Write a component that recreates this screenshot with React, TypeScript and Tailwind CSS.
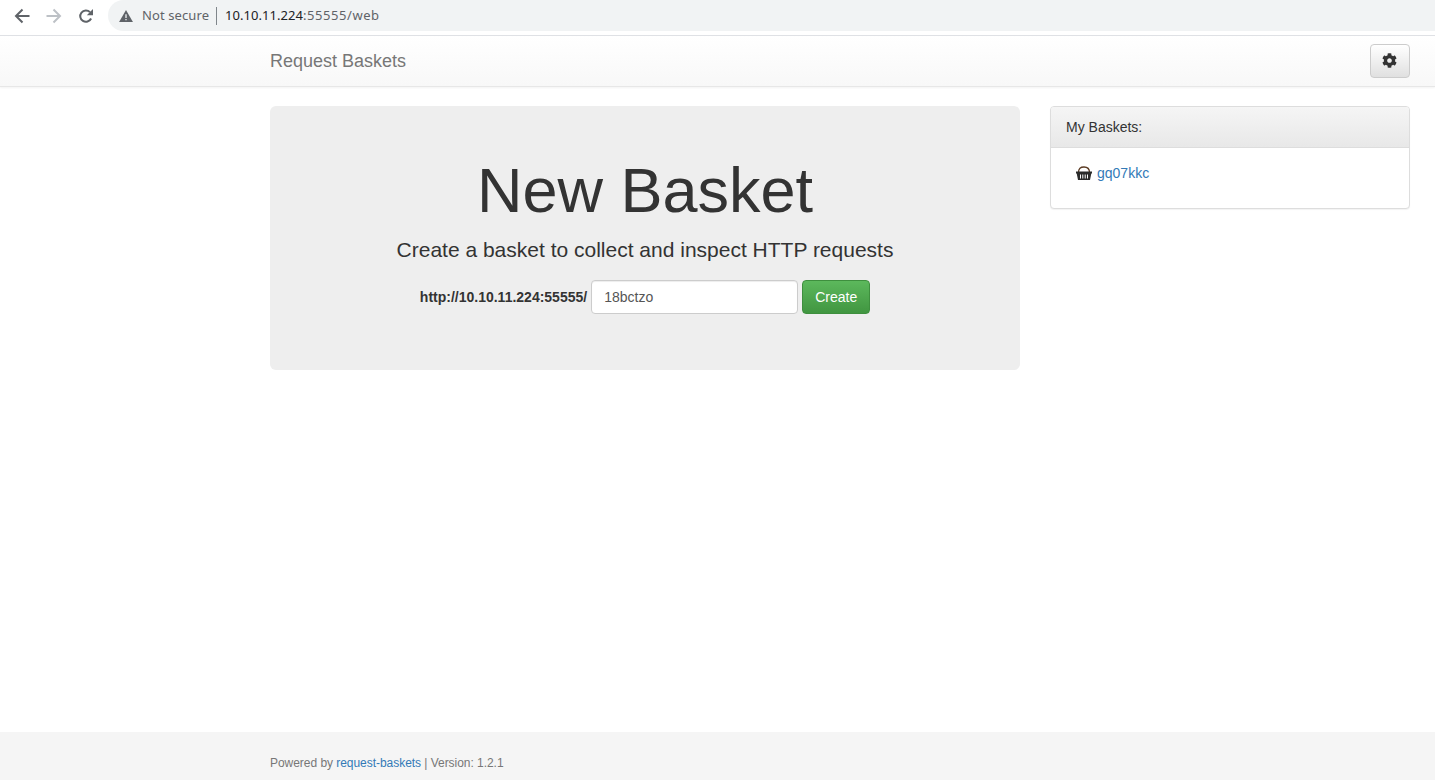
import React from "react";
import { FaCog } from "react-icons/fa";

function BackIcon({ color }: { color: string }) {
  return (
    <svg width="16" height="16" viewBox="0 0 16 16" fill="none" stroke={color} strokeWidth="2">
      <path d="M15.500 8H2M8.500 1.500L2 8l6.500 6.500" />
    </svg>
  );
}

function ForwardIcon({ color }: { color: string }) {
  return (
    <svg width="16" height="16" viewBox="0 0 16 16" fill="none" stroke={color} strokeWidth="2">
      <path d="M.5 8H14M7.500 1.500L14 8l-6.500 6.500" />
    </svg>
  );
}

function ReloadIcon() {
  return (
    <svg width="16" height="16" viewBox="0 0 16 16" fill="none">
      <path d="M13.100 10.500A5.700 5.700 0 1 1 12 4.100" stroke="#5f6368" strokeWidth="2" />
      <path d="M15 1v6.200H8.800z" fill="#5f6368" />
    </svg>
  );
}

function WarningIcon() {
  return (
    <svg width="14" height="12" viewBox="0 0 15 13">
      <path d="M7.500 0L15 13H0z" fill="#5f6368" />
      <path d="M6.800 4.500h1.400v4.200H6.800zM6.800 9.700h1.400v1.400H6.800z" fill="#f1f3f4" />
    </svg>
  );
}

function BasketIcon() {
  return (
    <svg width="16" height="14" viewBox="0 0 16 14">
      <path d="M2.500 6.500C2.500 2.500 4.500 1 8 1s5.500 1.500 5.500 5.500" fill="none" stroke="#5a3a22" strokeWidth="1.300" />
      <path d="M0 5.500h16v2h-.7L14 14H2L.7 7.500H0z" fill="#2b2b2b" />
      <path d="M4 8.500h1v4H4zM6.300 8.500h1v4h-1zM8.700 8.500h1v4h-1zM11 8.500h1v4h-1z" fill="#ffffff" />
    </svg>
  );
}

function BrowserBar() {
  return (
    <div className="flex h-[36px] items-start border-b border-[#dfe1e5] bg-white font-['Noto_Sans',sans-serif]">
      <div className="flex h-[31px] w-[108px] items-center gap-[16px] pl-[14px]">
        <BackIcon color="#5f6368" />
        <ForwardIcon color="#bdc1c6" />
        <ReloadIcon />
      </div>
      <div className="flex h-[31px] flex-1 items-center rounded-l-full bg-[#f1f3f4] pl-[11px] text-[13px]">
        <WarningIcon />
        <span className="ml-[9px] text-[#5f6368] tracking-[0.1px]">Not secure</span>
        <span className="ml-[7px] mr-[8px] h-[18px] w-px bg-[#80868b]" />
        <span className="text-[#202124] tracking-[0.05px]">10.10.11.224</span>
        <span className="text-[#5f6368] tracking-[0.55px]">:55555/web</span>
      </div>
    </div>
  );
}

function Navbar() {
  return (
    <div className="flex h-[51px] items-center justify-between border-b border-[#e7e7e7] bg-gradient-to-b from-white to-[#f8f8f8] pl-[270px] pr-[25px] shadow-[0_1px_2px_rgba(0,0,0,0.05)]">
      <span className="text-[18px] text-[#777777]">Request Baskets</span>
      <button className="flex h-[34px] w-[40px] items-center justify-center rounded border border-[#cccccc] bg-gradient-to-b from-white to-[#e0e0e0] pb-[2px] pr-px text-[#333333]">
        <FaCog size={15} />
      </button>
    </div>
  );
}

function Jumbotron() {
  return (
    <div className="flex h-[264px] w-[750px] flex-col items-center rounded-md bg-[#eeeeee] pt-[50px] text-[#333333]">
      <h1 className="text-[63px] leading-[69px]">New Basket</h1>
      <p className="mt-[10px] text-[21px] leading-[30px]">Create a basket to collect and inspect HTTP requests</p>
      <form className="mt-[15px] flex items-center">
        <label className="mr-[4px] text-[14px] font-bold">http://10.10.11.224:55555/</label>
        <input
          defaultValue="18bctzo"
          className="h-[34px] w-[207px] rounded border border-[#cccccc] bg-white px-[12px] text-[14px] text-[#555555] shadow-[inset_0_1px_1px_rgba(0,0,0,0.075)] outline-none"
        />
        <button
          type="button"
          className="ml-[4px] h-[34px] w-[68px] rounded border border-[#3e8f3e] bg-gradient-to-b from-[#5cb85c] to-[#419641] text-[14px] text-white"
        >
          Create
        </button>
      </form>
    </div>
  );
}

function BasketsPanel() {
  return (
    <div className="h-[103px] w-[360px] overflow-hidden rounded border border-[#dddddd] bg-white shadow-[0_1px_1px_rgba(0,0,0,0.05)]">
      <div className="flex h-[41px] items-center border-b border-[#dddddd] bg-gradient-to-b from-[#f5f5f5] to-[#e8e8e8] px-[15px] text-[14px] text-[#333333]">
        My Baskets:
      </div>
      <div className="flex items-center pl-[25px] pt-[15px] text-[14px] leading-[20px]">
        <BasketIcon />
        <a href="#" className="ml-[5px] text-[#337ab7]">gq07kkc</a>
      </div>
    </div>
  );
}

function Footer() {
  return (
    <div className="flex h-[48px] items-center bg-[#f5f5f5] pl-[270px] pt-[13px] text-[12px] tracking-[-0.04px] text-[#777777]">
      <span>
        Powered by <a href="#" className="text-[#337ab7]">request-baskets</a> | Version: <span>1.2.1</span>
      </span>
    </div>
  );
}

export default function App() {
  return (
    <div className="flex h-screen flex-col overflow-hidden bg-white font-['Liberation_Sans',Arial,sans-serif]">
      <BrowserBar />
      <Navbar />
      <div className="flex flex-1 items-start gap-[30px] pl-[270px] pt-[19px]">
        <Jumbotron />
        <BasketsPanel />
      </div>
      <Footer />
    </div>
  );
}
